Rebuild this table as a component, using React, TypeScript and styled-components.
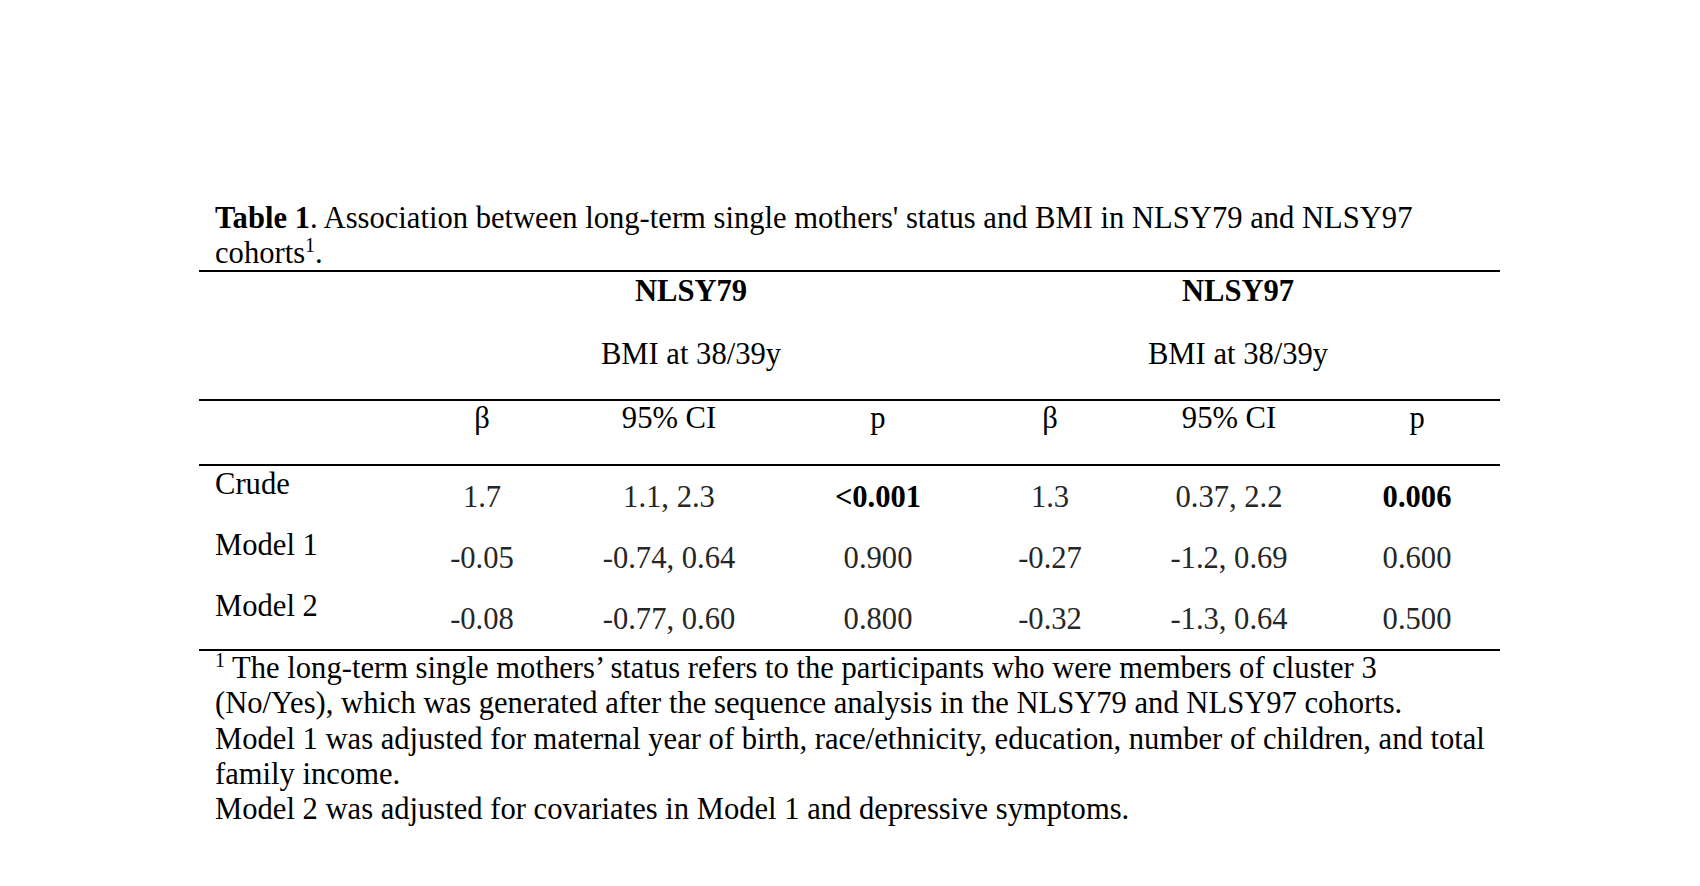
import styled, { createGlobalStyle } from "styled-components";

const GlobalStyle = createGlobalStyle`
  html, body {
    margin: 0;
    padding: 0;
    background: #ffffff;
  }
  body {
    font-family: "Liberation Serif", "Times New Roman", serif;
    color: #000000;
  }
`;

const Page = styled.div`
  width: 1700px;
  height: 886px;
  box-sizing: border-box;
  padding: 201px 0 0 199px;
  background: #ffffff;
  overflow: hidden;
`;

const Sheet = styled.div`
  width: 1301px;
  font-size: 30.6px;
  line-height: 35px;
`;

const Caption = styled.div`
  padding: 0 16px;
  margin-bottom: -1px;
  white-space: nowrap;
`;

const Line = styled.div`
  white-space: nowrap;
`;

const Sup = styled.sup`
  font-size: 20px;
  line-height: 0;
  vertical-align: 11px;
`;

const Table = styled.table`
  width: 1301px;
  table-layout: fixed;
  border-collapse: separate;
  border-spacing: 0;
  border-top: 2px solid #000;
  font-size: 30.6px;
  line-height: 35px;
`;

const Cell = styled.td<{ $rule?: boolean; $bold?: boolean; $pad?: string; $label?: boolean }>`
  padding: ${(p) => p.$pad || "0"};
  text-align: ${(p) => (p.$label ? "left" : "center")};
  vertical-align: top;
  font-weight: ${(p) => (p.$bold ? 700 : 400)};
  border-bottom: ${(p) => (p.$rule ? "2px solid #000" : "none")};
  white-space: nowrap;
  &:last-child {
    padding-right: 17px;
  }
`;

const Value = styled(Cell)`
  color: ${(p) => (p.$bold ? "#000" : "#262626")};
`;

const Footnote = styled.div`
  padding: 0 16px;
  line-height: 35.3px;
`;

type Row = { label: string; values: { text: string; bold?: boolean }[] };

const rows: Row[] = [
  {
    label: "Crude",
    values: [
      { text: "1.7" },
      { text: "1.1, 2.3" },
      { text: "<0.001", bold: true },
      { text: "1.3" },
      { text: "0.37, 2.2" },
      { text: "0.006", bold: true },
    ],
  },
  {
    label: "Model 1",
    values: [
      { text: "-0.05" },
      { text: "-0.74, 0.64" },
      { text: "0.900" },
      { text: "-0.27" },
      { text: "-1.2, 0.69" },
      { text: "0.600" },
    ],
  },
  {
    label: "Model 2",
    values: [
      { text: "-0.08" },
      { text: "-0.77, 0.60" },
      { text: "0.800" },
      { text: "-0.32" },
      { text: "-1.3, 0.64" },
      { text: "0.500" },
    ],
  },
];

const colWidths = [190, 186, 188, 230, 114, 244, 149];
const colHeads = ["β", "95% CI", "p", "β", "95% CI", "p"];

export default function App() {
  return (
    <>
      <GlobalStyle />
      <Page>
        <Sheet>
          <Caption>
            <Line>
              <b>Table 1</b>. Association between long-term single mothers' status and BMI in NLSY79 and NLSY97
            </Line>
            <Line>
              cohorts<Sup>1</Sup>.
            </Line>
          </Caption>

          <Table>
            <colgroup>
              {colWidths.map((w, i) => (
                <col key={i} style={{ width: w }} />
              ))}
            </colgroup>
            <tbody>
              <tr>
                <Cell $pad="2px 0 26px 0" />
                <Cell colSpan={3} $bold $pad="2px 0 26px 0">NLSY79</Cell>
                <Cell colSpan={3} $bold $pad="2px 0 26px 0">NLSY97</Cell>
              </tr>
              <tr>
                <Cell $rule $pad="2px 0 27px 0" />
                <Cell colSpan={3} $rule $pad="2px 0 27px 0">BMI at 38/39y</Cell>
                <Cell colSpan={3} $rule $pad="2px 0 27px 0">BMI at 38/39y</Cell>
              </tr>
              <tr>
                <Cell $rule $pad="0 0 28px 0" />
                {colHeads.map((h, i) => (
                  <Cell key={i} $rule $pad="0 0 28px 0">{h}</Cell>
                ))}
              </tr>
              {rows.map((r, ri) => (
                <tr key={r.label}>
                  <Cell $label $rule={ri === rows.length - 1} $pad="1px 0 25px 16px">
                    {r.label}
                  </Cell>
                  {r.values.map((v, vi) => (
                    <Value key={vi} $bold={v.bold} $rule={ri === rows.length - 1} $pad="14px 0 12px 0">
                      {v.text}
                    </Value>
                  ))}
                </tr>
              ))}
            </tbody>
          </Table>

          <Footnote>
            <Line>
              <Sup>1</Sup> The long-term single mothers’ status refers to the participants who were members of cluster 3
            </Line>
            <Line>(No/Yes), which was generated after the sequence analysis in the NLSY79 and NLSY97 cohorts.</Line>
            <Line>
              Model 1 was adjusted for maternal year of birth, race/ethnicity, education, number of children, and total
            </Line>
            <Line>family income.</Line>
            <Line>Model 2 was adjusted for covariates in Model 1 and depressive symptoms.</Line>
          </Footnote>
        </Sheet>
      </Page>
    </>
  );
}
